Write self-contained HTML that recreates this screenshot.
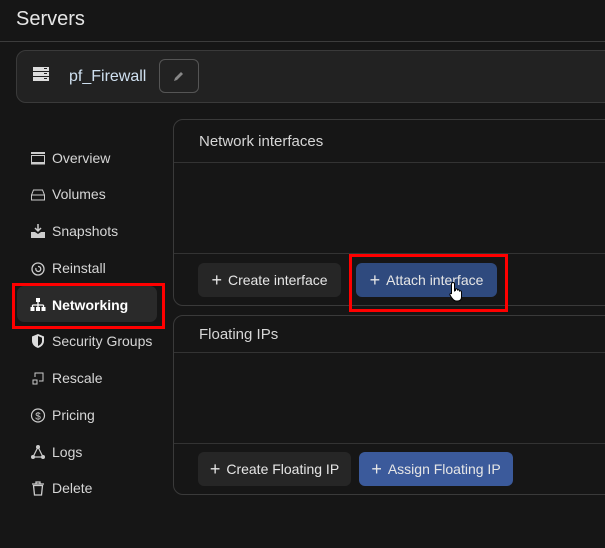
<!DOCTYPE html>
<html><head><style>
*{box-sizing:border-box;margin:0;padding:0}
body{width:605px;height:548px;background:#161616;font-family:"Liberation Sans",sans-serif;color:#ddd;position:relative;overflow:hidden}
.abs{position:absolute}
.title{left:16px;top:8px;font-size:20px;color:#e6e6e6}
.hr{left:0;top:41px;width:605px;height:1px;background:#3c3c3c}
.card0{left:16px;top:50px;width:620px;height:53px;background:#222;border:1px solid #3a3a3a;border-radius:10px}
.name{left:69px;top:68px;font-size:16px;color:#cfe0f0}
.edit{left:159px;top:59px;width:40px;height:34px;border:1px solid #555;border-radius:6px}
.nav{left:52px;font-size:14px;color:#d6d6d6}
.ico{left:30px;width:16px;height:16px}
.sel{left:17px;top:286px;width:140px;height:36px;background:#2a2a2a;border-radius:7px}
.red{border:3px solid #f00}
.card{left:173px;width:460px;border:1px solid #3a3a3a;border-radius:10px}
.sep{left:174px;width:431px;height:1px;background:#333}
.h{left:199px;font-size:15px;color:#d6d6d6}
.btn{height:34px;border-radius:6px;font-size:14px;color:#e6e6e6;display:flex;align-items:center;justify-content:center;gap:6px}
.g{background:#262626}.b{background:#2f4a7e}.b2{background:#3b5a9b}
.plus{font-size:18px;line-height:1}
</style></head><body>
<div class="abs title">Servers</div>
<div class="abs hr"></div>
<div class="abs card0"></div>
<svg class="abs" style="left:33px;top:67px" width="16" height="14"><rect x="0" y="0" width="16" height="4" fill="#ddd"/><rect x="0" y="5" width="16" height="4" fill="#ddd"/><rect x="0" y="10" width="16" height="4" fill="#ddd"/><rect x="11" y="1" width="3" height="1" fill="#222"/><rect x="11" y="6" width="3" height="1" fill="#222"/><rect x="11" y="11" width="3" height="1" fill="#222"/></svg>
<div class="abs name">pf_Firewall</div>
<div class="abs edit"></div>
<svg class="abs" style="left:173px;top:70px" width="12" height="12"><path d="M1 11 L2 8 L8 2 L10 4 L4 10 Z" fill="#888"/></svg>

<div class="abs sel"></div>
<div class="abs red" style="left:12px;top:283px;width:153px;height:46px"></div>
<svg class="abs ico" style="top:150px"><rect x="1" y="2" width="14" height="2" fill="#ccc"/><rect x="1.5" y="5.5" width="13" height="7" fill="none" stroke="#ccc"/><rect x="1" y="13" width="14" height="1.5" fill="#ccc"/></svg>
<div class="abs nav" style="top:150px">Overview</div>
<svg class="abs ico" style="top:186px"><path d="M1.5 9 L3.5 4 H12.5 L14.5 9 V14 H1.5 Z M1.5 9 H14.5" fill="none" stroke="#ccc"/></svg>
<div class="abs nav" style="top:186px">Volumes</div>
<svg class="abs ico" style="top:223px"><path d="M8 1 V8 M5 5 L8 8 L11 5" stroke="#ccc" fill="none" stroke-width="1.5"/><path d="M1 9 H5 L8 11 L11 9 H15 V15 H1Z" fill="#ccc"/></svg>
<div class="abs nav" style="top:223px">Snapshots</div>
<svg class="abs ico" style="top:260px"><circle cx="8" cy="9" r="6" fill="none" stroke="#ccc" stroke-width="1.3"/><path d="M6 8 A2.5 2.5 0 1 0 8 6.5" fill="none" stroke="#ccc" stroke-width="1.3"/></svg>
<div class="abs nav" style="top:260px">Reinstall</div>
<svg class="abs ico" style="top:297px"><rect x="6" y="1" width="4" height="4" fill="#fff"/><path d="M8 5 V8 M2.5 8 H13.5 M2.5 8 V10 M8 8 V10 M13.5 8 V10" stroke="#fff" stroke-width="1.3"/><rect x="0.5" y="10" width="4" height="4" fill="#fff"/><rect x="6" y="10" width="4" height="4" fill="#fff"/><rect x="11.5" y="10" width="4" height="4" fill="#fff"/></svg>
<div class="abs nav" style="top:297px;font-weight:bold;color:#fff">Networking</div>
<svg class="abs ico" style="top:333px"><path d="M8 1 L14 3.5 V8 C14 11.5 11 14 8 15 C5 14 2 11.5 2 8 V3.5 Z" fill="#ddd"/><path d="M8 3 V13 C10 12 12 10.5 12 8 V4.8 Z" fill="#161616"/></svg>
<div class="abs nav" style="top:333px">Security Groups</div>
<svg class="abs ico" style="top:370px"><rect x="3" y="10" width="4" height="4" fill="none" stroke="#ccc"/><path d="M5 7 V3 H13 V11 H9" fill="none" stroke="#ccc"/></svg>
<div class="abs nav" style="top:370px">Rescale</div>
<svg class="abs ico" style="top:407px"><circle cx="8" cy="8.5" r="6.5" fill="none" stroke="#ccc" stroke-width="1.2"/><text x="8" y="12.5" font-size="10" text-anchor="middle" fill="#ccc" font-family="Liberation Sans">$</text></svg>
<div class="abs nav" style="top:407px">Pricing</div>
<svg class="abs ico" style="top:444px"><path d="M8 3 L3 13 H13 Z" fill="none" stroke="#ccc" stroke-width="1.2"/><circle cx="8" cy="3" r="2" fill="#ccc"/><circle cx="3" cy="13" r="2" fill="#ccc"/><circle cx="13" cy="13" r="2" fill="#ccc"/></svg>
<div class="abs nav" style="top:444px">Logs</div>
<svg class="abs ico" style="top:480px"><path d="M2 4 H14 M6 4 V2 H10 V4" stroke="#ccc" fill="none" stroke-width="1.3"/><path d="M3.5 5.5 H12.5 L11.5 15 H4.5 Z" fill="none" stroke="#ccc" stroke-width="1.3"/></svg>
<div class="abs nav" style="top:480px">Delete</div>

<div class="abs card" style="top:119px;height:187px"></div>
<div class="abs h" style="top:133px">Network interfaces</div>
<div class="abs sep" style="top:162px"></div>
<div class="abs sep" style="top:253px"></div>
<div class="abs btn g" style="left:198px;top:263px;width:143px"><span class="plus">+</span>Create interface</div>
<div class="abs btn b" style="left:356px;top:263px;width:141px"><span class="plus">+</span>Attach interface</div>
<div class="abs red" style="left:349px;top:254px;width:159px;height:58px"></div>

<div class="abs card" style="top:315px;height:180px"></div>
<div class="abs h" style="top:326px">Floating IPs</div>
<div class="abs sep" style="top:352px"></div>
<div class="abs sep" style="top:443px"></div>
<div class="abs btn g" style="left:198px;top:452px;width:153px"><span class="plus">+</span>Create Floating IP</div>
<div class="abs btn b2" style="left:359px;top:452px;width:154px"><span class="plus">+</span>Assign Floating IP</div>
<svg class="abs" style="left:449px;top:281px" width="16" height="22"><path d="M4 1.5 C5 1.5 5.5 2 5.5 3 V10 L6.5 9.5 V8 C7.5 7.5 8.5 8 8.5 9 C9.5 8.5 10.5 9 10.5 10 C11.5 9.5 12.5 10 12.5 11 V16 C12.5 18.5 11 20 8.5 20 H7 C5 20 4 18.5 2.5 16.5 L1 14 C0.5 13 1.5 12 2.5 12.5 L2.5 3 C2.5 2 3 1.5 4 1.5 Z" fill="#fff" stroke="#000" stroke-width="1"/></svg>
</body></html>
